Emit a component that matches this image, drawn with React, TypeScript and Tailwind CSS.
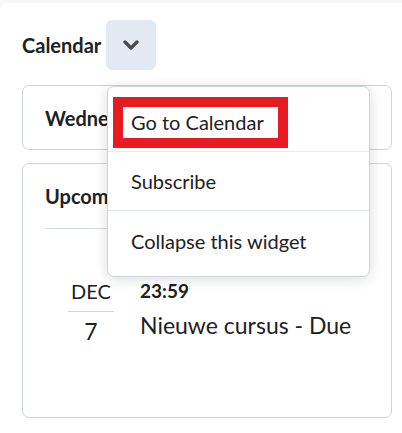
export default function App() {
  const font = { fontFamily: "Lato, 'Open Sans', sans-serif" };
  return (
    <div className="w-[402px] h-[433px] bg-[#f6f7f8] pt-[3px] overflow-hidden text-[#202122]" style={font}>
      <div className="relative h-full bg-white rounded-tl-[8px] pl-[22px] pr-[10px] pt-[17px]">
        {/* Header */}
        <div className="flex items-center gap-[5px]">
          <h2 className="text-[20px] font-bold leading-none">Calendar</h2>
          <button className="flex items-center justify-center w-[50px] h-[50px] rounded-[6px] bg-[#e3e9f1]">
            <svg width="18" height="12" viewBox="0 0 18 12" fill="none">
              <path d="M3 3 L9 9 L15 3" stroke="#494c4e" strokeWidth="3.4" strokeLinecap="round" strokeLinejoin="round" />
            </svg>
          </button>
        </div>

        {/* Today card */}
        <div className="mt-[15px] h-[65px] rounded-[7px] border border-[#cdd5dc] flex items-center px-[22px]">
          <span className="text-[20px] font-bold">Wednesday</span>
        </div>

        {/* Upcoming card */}
        <div className="mt-[13px] h-[255px] rounded-[7px] border border-[#cdd5dc] px-[22px]">
          <div className="h-[65px] border-b border-[#d3d9e3] flex items-center">
            <span className="text-[20px] font-bold">Upcoming events</span>
          </div>
          <div className="flex gap-[26px] pt-[51px] pl-[23px]">
            <div className="w-[46px] flex flex-col items-center">
              <span className="text-[20px] leading-[22px]">DEC</span>
              <div className="w-full h-px bg-[#d6d2ca] mt-[9px]" />
              <span className="text-[23px] leading-[28px] mt-[5px]">7</span>
            </div>
            <div className="flex flex-col">
              <span className="text-[19px] font-bold leading-[22px]">23:59</span>
              <span className="text-[23px] leading-[28px] mt-[9px]">Nieuwe cursus - Due</span>
            </div>
          </div>
        </div>

        {/* Dropdown menu */}
        <div className="absolute left-[107px] top-[83px] w-[263px] rounded-[7px] border border-[#cdd5dc] bg-white py-[6px] shadow-[0_2px_14px_rgba(0,0,0,0.14)]">
          <div className="relative h-[59px] flex items-center px-[23px] border-b border-[#e3e9f1]">
            <span className="text-[20px]">Go to Calendar</span>
            <div className="absolute left-[5px] top-[4px] w-[175px] h-[51px] border-[10px] border-[#e71c22]" />
          </div>
          <div className="h-[59px] flex items-center px-[23px] border-b border-[#e3e9f1]">
            <span className="text-[20px]">Subscribe</span>
          </div>
          <div className="h-[59px] flex items-center px-[23px]">
            <span className="text-[20px]">Collapse this widget</span>
          </div>
        </div>
      </div>
    </div>
  );
}
